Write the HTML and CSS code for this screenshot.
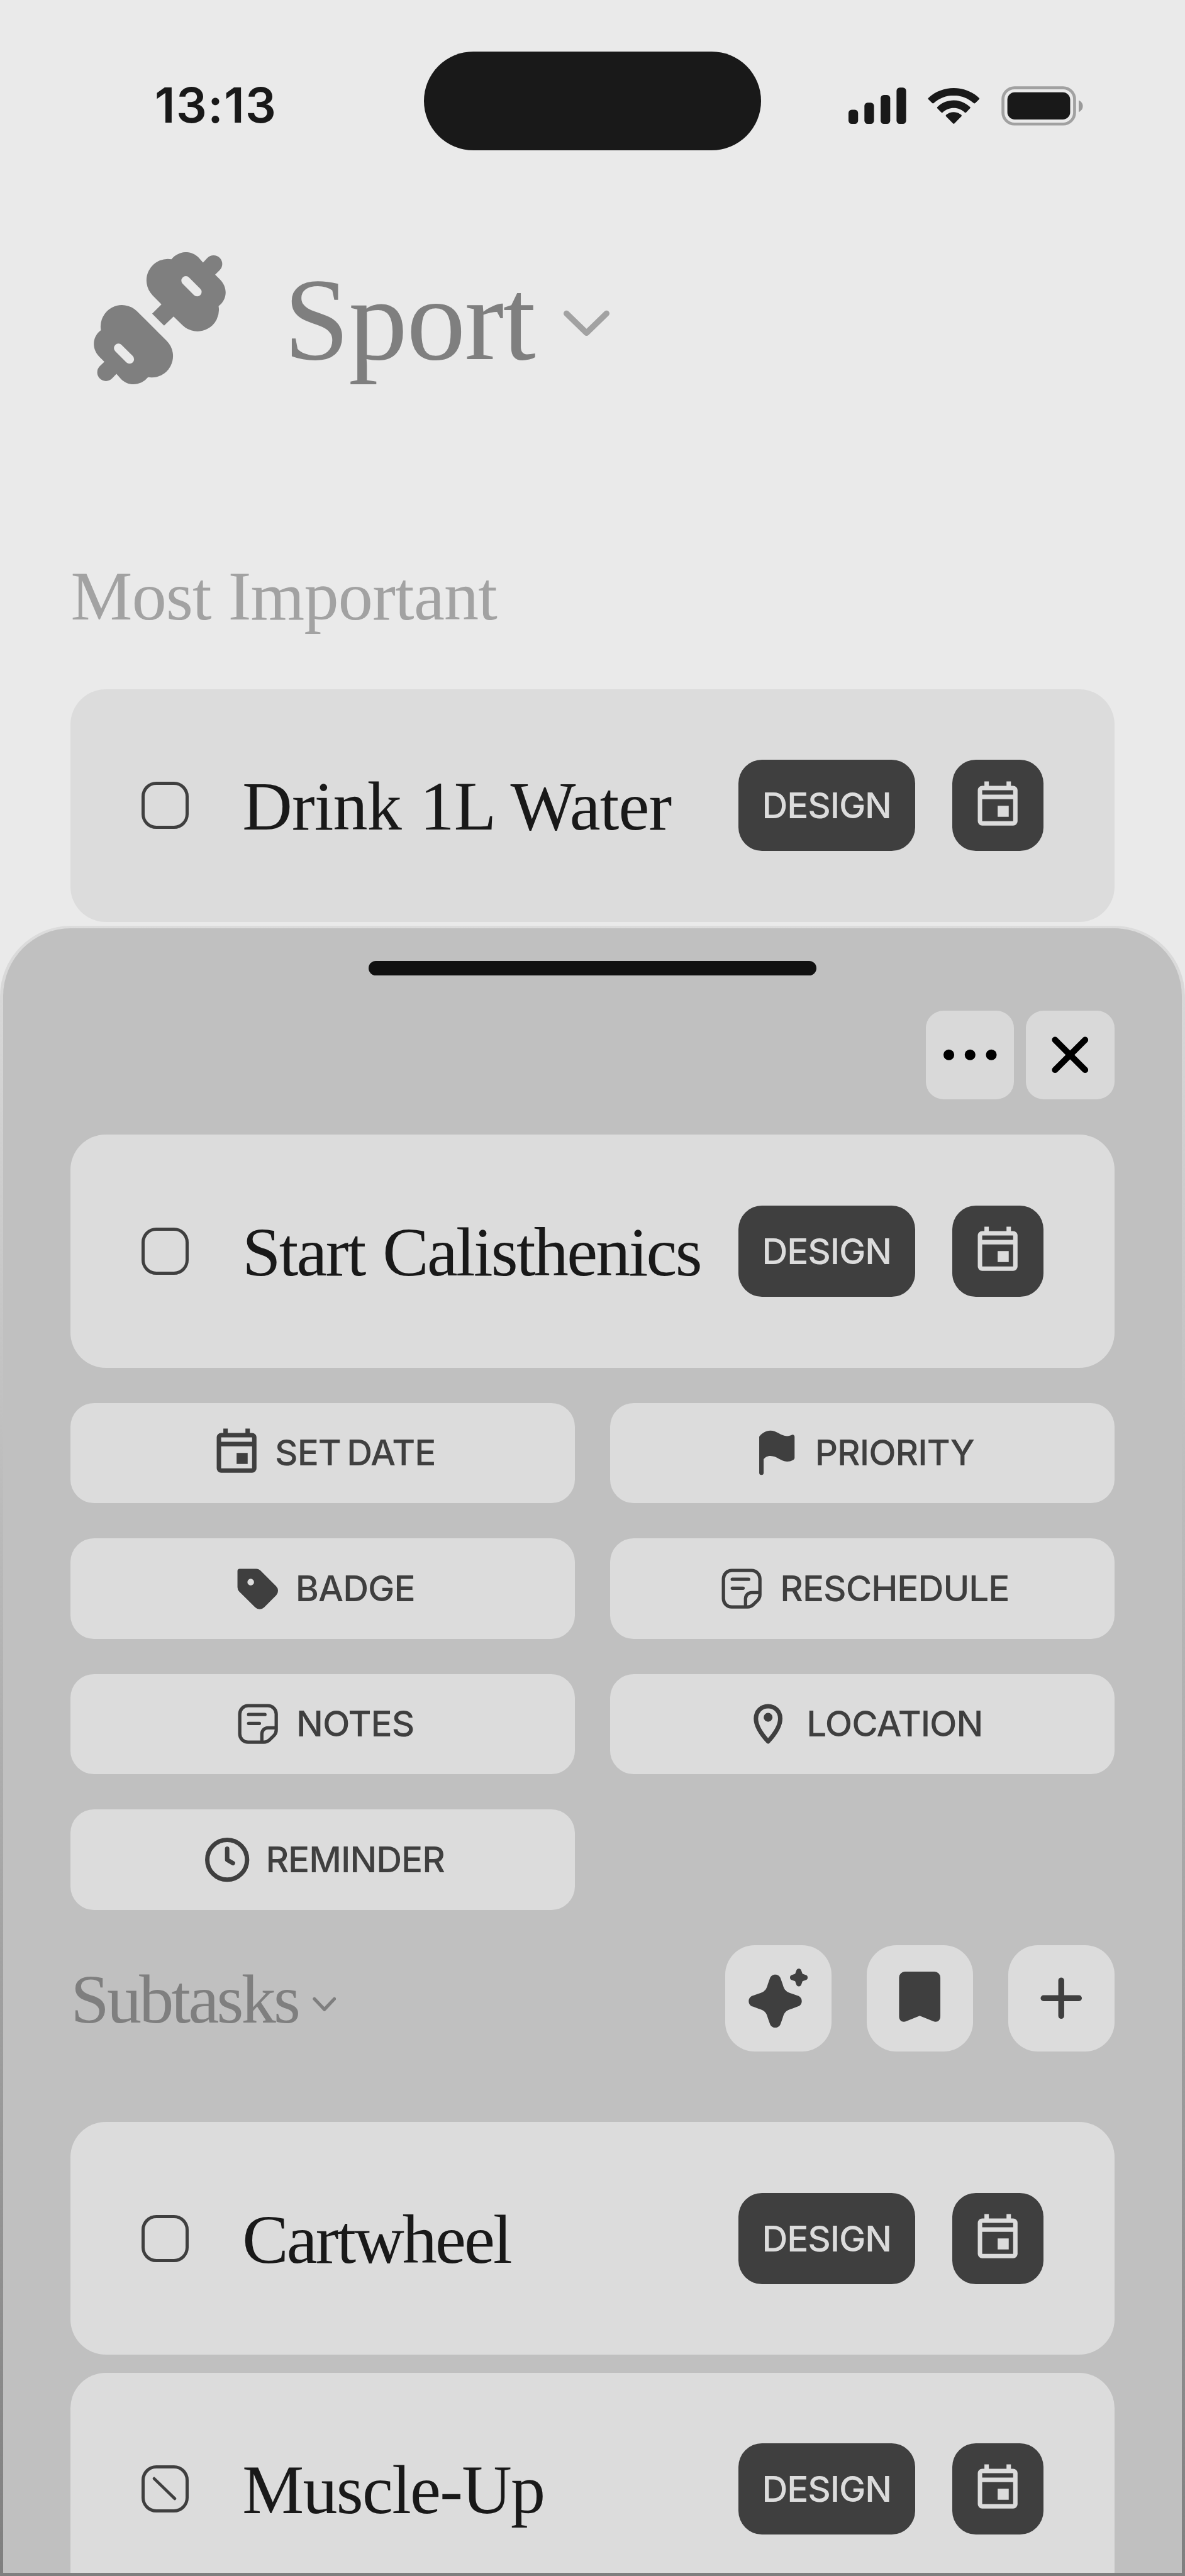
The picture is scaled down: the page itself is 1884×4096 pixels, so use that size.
FILE: index.html
```html
<!DOCTYPE html>
<html lang="en">
<head>
<meta charset="utf-8">
<title>Sport</title>
<link rel="stylesheet" href="styles.css">
</head>
<body>
<svg class="defs" aria-hidden="true">
  <symbol id="i-date" viewBox="0 0 24 24"><path fill-rule="evenodd" d="M6 1h2v2h8V1h2v2h1a2 2 0 0 1 2 2v14a2 2 0 0 1-2 2H5a2 2 0 0 1-2-2V5a2 2 0 0 1 2-2h1zM5 5v2h14V5zM5 9v10h14V9zM12 12h5v5h-5z"/></symbol>
  <symbol id="i-flag" viewBox="0 0 24 24"><path d="M4 5C4 4.8 4 4.6 4.3 4.3 5.5 3 7 1.95 9 1.95c3 0 4.8 2.45 7.6 2.45 1 0 1.6-.3 2.2-.55.6-.25 1.2.15 1.2.85v9.6c0 .8-1.4 1.6-3.4 1.6-2.8 0-4.6-2.5-7.6-2.5-1.4 0-2.3.7-3 1.5V21a1 1 0 0 1-2 0z"/></symbol>
  <symbol id="i-tag" viewBox="0 0 24 24"><path fill-rule="evenodd" d="M4 3h7.5c.8 0 1.4.3 1.9.8l7.1 7.1a2.9 2.9 0 0 1 0 4.1l-5.4 5.4a2.9 2.9 0 0 1-4.1 0L3.8 13.3A2.9 2.9 0 0 1 3 11.3V4a1 1 0 0 1 1-1zM9 7.5a1.5 1.5 0 1 0 0 3 1.5 1.5 0 0 0 0-3z"/></symbol>
  <symbol id="i-note" viewBox="0 0 24 24"><g fill="none" stroke="currentColor" stroke-width="1.5"><path d="M7.5 3.75h9a3.75 3.75 0 0 1 3.75 3.75v7.2a3.6 3.6 0 0 1-1.1 2.6l-1.9 1.9a3.6 3.6 0 0 1-2.6 1.05H7.5a3.75 3.75 0 0 1-3.75-3.75v-9A3.75 3.75 0 0 1 7.5 3.75z"/><path d="M20 13.75h-3.5a2.75 2.75 0 0 0-2.75 2.75V20"/><path stroke-linecap="round" d="M7.75 7.75h7.4M7.75 11.75h4.9"/></g></symbol>
  <symbol id="i-pin" viewBox="0 0 24 24"><path fill="none" stroke="currentColor" stroke-width="2" stroke-linejoin="round" d="M12 19.9C9.6 17.3 6.5 13.2 6.5 9.6 6.5 6.3 8.9 4 12 4s5.5 2.3 5.5 5.6c0 3.6-3.1 7.7-5.5 10.3z"/><circle cx="12" cy="9" r="2"/></symbol>
  <symbol id="i-clock" viewBox="0 0 24 24"><g fill="none" stroke="currentColor" stroke-width="2" stroke-linecap="round" stroke-linejoin="round"><circle cx="12" cy="12" r="9"/><path d="M12 7v5l2.6 1.5"/></g></symbol>
</svg>

<div class="screen">
  <div class="status">
    <div class="time">13:13</div>
    <div class="island"></div>
    <svg class="signals" viewBox="0 0 80 14">
      <g fill="#191919">
        <rect x="0" y="8" width="3.25" height="4.8" rx="1.1"/>
        <rect x="5.4" y="5.6" width="3.25" height="7.2" rx="1.1"/>
        <rect x="10.9" y="3" width="3.25" height="9.8" rx="1.1"/>
        <rect x="16.3" y=".5" width="3.25" height="12.3" rx="1.1"/>
        <g transform="translate(27 .65) scale(1.015)">
          <path d="M8.57 2.466c2.487 0 4.879.922 6.682 2.576.136.128.353.126.487-.004l1.297-1.263a.344.344 0 0 0-.003-.494c-4.73-4.375-12.194-4.375-16.925 0a.344.344 0 0 0-.003.494l1.298 1.263c.133.13.35.132.486.004 1.803-1.654 4.195-2.576 6.682-2.576z"/>
          <path d="M8.568 6.687c1.357 0 2.666.511 3.672 1.435.136.132.35.129.483-.006l1.288-1.32a.37.37 0 0 0-.006-.518c-3.063-2.891-7.808-2.891-10.872 0a.37.37 0 0 0-.005.519l1.287 1.319c.133.135.347.138.483.006 1.006-.923 2.314-1.435 3.67-1.435z"/>
          <path d="M11.092 9.48a.37.37 0 0 0-.013-.53c-1.45-1.229-3.576-1.229-5.027 0a.37.37 0 0 0-.012.53l2.279 2.31a.35.35 0 0 0 .499 0z"/>
        </g>
        <rect x="53.9" y="2.1" width="21.3" height="9.2" rx="2.5"/>
      </g>
      <rect x="52.4" y=".55" width="24.3" height="12.3" rx="3.9" fill="none" stroke="#a1a1a1"/>
      <path d="M78.1 4.8v4c.85-.35 1.4-1.1 1.4-2s-.55-1.65-1.4-2z" fill="#9a9a9a"/>
    </svg>
  </div>

  <header class="head">
    <svg class="barbell" viewBox="180 161 807 807">
      <g fill="#7f7f7f">
        <path d="M655 204C700 150 775 147 820 193L848 224 875 196A53 53 0 0 1 950 271L922 298 952 328C1000 376 998 450 943 491A131 131 0 0 1 723 608L668 554 610 610 537 537 594 480 540 425A131 131 0 0 1 655 204Z"/>
        <path transform="rotate(180 583.5 564.5)" d="M655 204C700 150 775 147 820 193L848 224 875 196A53 53 0 0 1 950 271L922 298 952 328C1000 376 998 450 943 491A131 131 0 0 1 723 608L540 425A131 131 0 0 1 655 204Z"/>
      </g>
      <path d="M743 335L812 404M331 747L399 815" stroke="#eaeaea" stroke-width="55" stroke-linecap="round"/>
    </svg>
    <h1>Sport</h1>
    <svg class="chev-lg" viewBox="0 0 16 10"><path d="M1.2 1.8l6.8 6.6 6.8-6.6" fill="none" stroke="#a2a2a2" stroke-width="2" stroke-linecap="round" stroke-linejoin="round"/></svg>
  </header>

  <h2 class="section">Most Important</h2>
  <div class="card">
    <span class="box"></span>
    <span class="name drink">Drink 1L Water</span>
    <span class="badge">DESIGN</span>
    <span class="day"><svg><use href="#i-date"/></svg></span>
  </div>

  <div class="sheet">
    <div class="inner">
      <div class="handle"></div>
      <div class="tools">
        <button class="tool"><svg viewBox="0 0 30 30"><circle cx="7.8" cy="15" r="1.82"/><circle cx="15" cy="15" r="1.82"/><circle cx="22.2" cy="15" r="1.82"/></svg></button>
        <button class="tool"><svg viewBox="0 0 30 30"><path d="M9.9 9.9l10.2 10.2M20.1 9.9L9.9 20.1" stroke="#000" stroke-width="2.1" stroke-linecap="round"/></svg></button>
      </div>
      <div class="card">
        <span class="box"></span>
        <span class="name start">Start Calisthenics</span>
        <span class="badge">DESIGN</span>
        <span class="day"><svg><use href="#i-date"/></svg></span>
      </div>
      <div class="actions">
        <button class="action"><svg><use href="#i-date"/></svg>SET DATE</button>
        <button class="action"><svg><use href="#i-flag"/></svg>PRIORITY</button>
        <button class="action"><svg><use href="#i-tag"/></svg>BADGE</button>
        <button class="action"><svg><use href="#i-note"/></svg>RESCHEDULE</button>
        <button class="action"><svg><use href="#i-note"/></svg>NOTES</button>
        <button class="action"><svg><use href="#i-pin"/></svg>LOCATION</button>
        <button class="action"><svg><use href="#i-clock"/></svg>REMINDER</button>
      </div>
      <div class="subhead">
        <h2>Subtasks</h2>
        <svg class="chev-sm" viewBox="0 0 8 5"><path d="M.6.7L4 4.3 7.4.7" fill="none" stroke="#7f7f7f" stroke-width="1.1" stroke-linecap="round" stroke-linejoin="round"/></svg>
        <div class="subtools">
          <button class="sub"><svg viewBox="0 0 24 24">
            <path transform="translate(11 13)" d="M0-9C.9-9 1.6-8.5 1.85-7.6L2.5-5.8C2.8-4.6 3.2-3.9 3.6-3.6 3.9-3.2 4.6-2.8 5.8-2.5L7.6-1.85C8.5-1.6 9-.9 9 0 9 .9 8.5 1.6 7.6 1.85L5.8 2.5C4.6 2.8 3.9 3.2 3.6 3.6 3.2 3.9 2.8 4.6 2.5 5.8L1.85 7.6C1.6 8.5.9 9 0 9-.9 9-1.6 8.5-1.85 7.6L-2.5 5.8C-2.8 4.6-3.2 3.9-3.6 3.6-3.9 3.2-4.6 2.8-5.8 2.5L-7.6 1.85C-8.5 1.6-9 .9-9 0-9-.9-8.5-1.6-7.6-1.85L-5.8-2.5C-4.6-2.8-3.9-3.2-3.6-3.6-3.2-3.9-2.8-4.6-2.5-5.8L-1.85-7.6C-1.6-8.5-.9-9 0-9Z"/>
            <path transform="translate(19 5)" d="M0-3C.5-3 .75-2.7.87-2.3L1.25-1.25 2.3-.87C2.7-.75 3-.5 3 0 3 .5 2.7.75 2.3.87L1.25 1.25.87 2.3C.75 2.7.5 3 0 3-.5 3-.75 2.7-.87 2.3L-1.25 1.25-2.3.87C-2.7.75-3 .5-3 0-3-.5-2.7-.75-2.3-.87L-1.25-1.25-.87-2.3C-.75-2.7-.5-3 0-3Z"/>
          </svg></button>
          <button class="sub"><svg viewBox="0 0 24 24"><path d="M7 3h10a2 2 0 0 1 2 2v13.2c0 1.5-1.2 2.2-2.5 1.6L12 18l-4.500 1.8C6.200 20.400 5 19.700 5 18.200V5a2 2 0 0 1 2-2z"/></svg></button>
          <button class="sub"><svg viewBox="0 0 24 24"><path d="M12 6v12M6 12h12" stroke="#3f3f3f" stroke-width="2" stroke-linecap="round"/></svg></button>
        </div>
      </div>
      <div class="list">
        <div class="card">
          <span class="box"></span>
          <span class="name cart">Cartwheel</span>
          <span class="badge">DESIGN</span>
          <span class="day"><svg><use href="#i-date"/></svg></span>
        </div>
        <div class="card">
          <span class="box"><svg viewBox="0 0 16 16"><path d="M4.500 4.500l7 6.800" stroke="#3f3f3f" stroke-linecap="round"/></svg></span>
          <span class="name muscle">Muscle-Up</span>
          <span class="badge">DESIGN</span>
          <span class="day"><svg><use href="#i-date"/></svg></span>
        </div>
      </div>
    </div>
  </div>
</div>
</body>
</html>
```
FILE: styles.css
```css
/* 1rem = 10 points of a 402-point-wide phone screen */
html { font-size: calc(1000vw / 402); }
* { box-sizing: border-box; }
body { margin: 0; background: #eaeaea; }
h1, h2 { margin: 0; font-weight: 400; }
svg { display: block; flex: none; fill: currentColor; }
button { border: 0; padding: 0; margin: 0; }
.defs { position: absolute; width: 0; height: 0; }

.screen {
  position: relative;
  width: 40.2rem;
  height: 87.4rem;
  overflow: hidden;
  background: #eaeaea;
  font-family: "Liberation Serif", serif;
}

.status {
  display: grid;
  grid-template-columns: 14.38rem 11.44rem 1fr;
  align-items: center;
  padding-top: 1.76rem;
}
.time {
  margin-top: 0.32rem;
  padding-left: 5.25rem;
  font: 600 1.64rem/1 Inter, sans-serif;
  letter-spacing: 0.03rem;
  color: #191919;
}
.island { height: 3.35rem; border-radius: 1.675rem; background: #191919; }
.signals { width: 8rem; height: 1.4rem; margin: 0.38rem 0 0 2.96rem; }

.head {
  display: flex;
  align-items: center;
  height: 6rem;
  margin-top: 2.69rem;
  padding-left: 3.17rem;
}
.barbell { width: 4.48rem; height: 4.48rem; }
h1 {
  margin-left: 1.98rem;
  padding-top: 0.12rem;
  font-size: 4rem;
  line-height: 1;
  letter-spacing: -0.03rem;
  color: #7f7f7f;
}
.chev-lg { width: 1.6rem; height: 1rem; margin: 0.3rem 0 0 0.96rem; }

.section {
  margin-top: 5.24rem;
  padding-left: 2.4rem;
  font-size: 2.35rem;
  line-height: 2.4rem;
  letter-spacing: -0.016rem;
  color: #a2a2a2;
}
.screen > .card { margin: 1.94rem 2.4rem 0; }

.card {
  display: flex;
  align-items: center;
  height: 7.9rem;
  padding: 0 2.4rem;
  border-radius: 1.2rem;
  background: #dcdcdc;
}
.box { flex: none; width: 1.6rem; height: 1.6rem; border: 0.12rem solid #3f3f3f; border-radius: 0.5rem; }
.box svg { width: 1.6rem; height: 1.6rem; margin: -0.12rem; }
.name {
  flex: 1;
  min-width: 0;
  padding: 0.06rem 0 0 1.82rem;
  white-space: nowrap;
  font-size: 2.35rem;
  line-height: 1;
  color: #191919;
}
.drink { letter-spacing: -0.018rem; word-spacing: 0.06rem; }
.start { letter-spacing: -0.058rem; word-spacing: 0.08rem; }
.cart { letter-spacing: -0.062rem; }
.muscle { letter-spacing: -0.036rem; }
.badge, .day {
  display: flex;
  flex: none;
  align-items: center;
  justify-content: center;
  height: 3.1rem;
  border-radius: 0.8rem;
  background: #3f3f3f;
  color: #dcdcdc;
}
.badge {
  width: 6rem;
  padding-top: 0.04rem;
  font: 450 1.21rem/1 Inter, sans-serif;
  letter-spacing: -0.025rem;
}
.day { width: 3.1rem; margin-left: 1.26rem; }
.day svg { width: 1.8rem; height: 1.8rem; }

.sheet {
  position: absolute;
  top: 31.4rem;
  left: 0;
  width: 40.2rem;
  height: 56rem;
  padding: 0.1rem;
  border-radius: 2.4rem 2.4rem 0 0;
  background: linear-gradient(#dcdcdc, #7f7f7f);
}
.inner {
  height: 55.8rem;
  padding: 1.1rem 2.3rem 0;
  border-radius: 2.3rem 2.3rem 0 0;
  overflow: hidden;
  background: #c0c0c0;
}
.handle { width: 15.2rem; height: 0.5rem; margin: 0 auto; border-radius: 0.25rem; background: #111; }
.tools { display: flex; justify-content: flex-end; gap: 0.4rem; margin: 1.2rem 0; }
.tool { width: 3rem; height: 3rem; border-radius: 0.6rem; background: #d9d9d9; color: #000; }
.tool svg { width: 3rem; height: 3rem; }

.actions {
  display: grid;
  grid-template-columns: 1fr 1fr;
  gap: 1.2rem;
  margin: 1.2rem 0;
}
.action {
  display: flex;
  align-items: center;
  justify-content: center;
  gap: 0.4rem;
  height: 3.4rem;
  border-radius: 0.8rem;
  background: #dcdcdc;
  color: #3f3f3f;
  font: 450 1.21rem/1 Inter, sans-serif;
  letter-spacing: -0.022rem;
  word-spacing: -0.1rem;
}
.action svg { width: 1.8rem; height: 1.8rem; }

.subhead { display: flex; align-items: center; height: 3.6rem; }
.subhead h2 { padding-top: 0.08rem; font-size: 2.35rem; line-height: 1; letter-spacing: -0.08rem; color: #7f7f7f; }
.chev-sm { width: 0.8rem; height: 0.5rem; margin: 0.4rem 0 0 0.48rem; }
.subtools { display: flex; gap: 1.2rem; margin-left: auto; }
.sub {
  display: flex;
  align-items: center;
  justify-content: center;
  width: 3.6rem;
  height: 3.6rem;
  border-radius: 1rem;
  background: #dcdcdc;
  color: #3f3f3f;
}
.sub svg { width: 2.4rem; height: 2.4rem; }

.list { display: flex; flex-direction: column; gap: 0.6rem; margin-top: 2.4rem; }
.list .card { flex: none; }
```
